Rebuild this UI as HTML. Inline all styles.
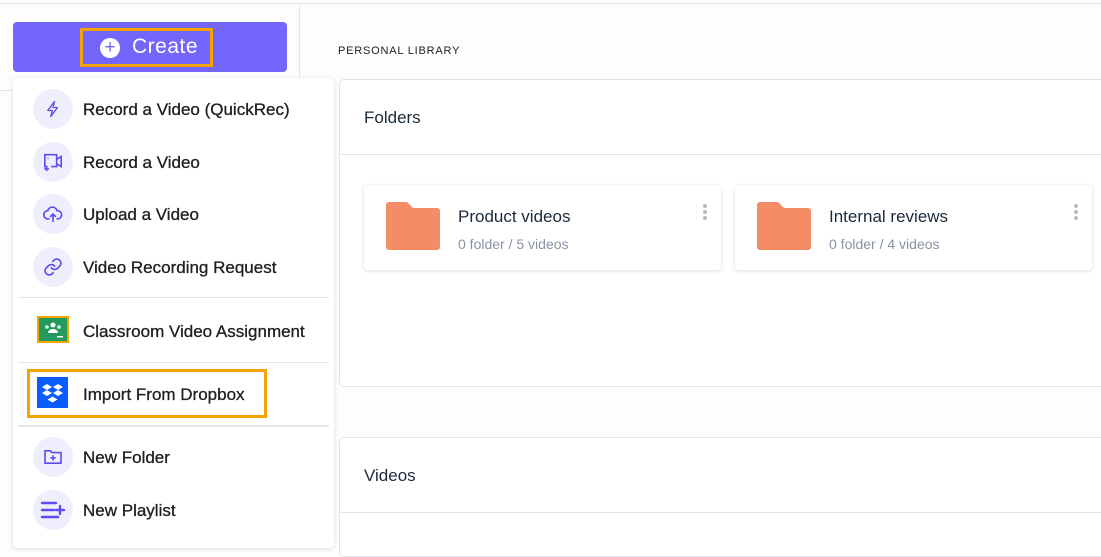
<!DOCTYPE html>
<html><head><style>
*{box-sizing:border-box;margin:0;padding:0}
body{width:1101px;height:537px;overflow:hidden;background:#fdfdfd;font-family:"Liberation Sans",sans-serif;position:relative;color:#222}
.topline{position:absolute;left:0;top:3px;width:1101px;height:1px;background:#e4e4ea}
.vline{position:absolute;left:299px;top:3px;width:1px;height:88px;background:#e4e4ea}
.hline{position:absolute;left:0;top:90px;width:14px;height:1px;background:#e4e4ea}
.create{position:absolute;left:13px;top:22px;width:274px;height:50px;background:#7566fb;border-radius:4px}
.cbox{position:absolute;left:80px;top:28px;width:133px;height:39px;border:3px solid #f5a300}
.cbox .plus{position:absolute;left:17px;top:7px;width:20px;height:20px;border-radius:50%;background:#fff;color:#7566fb;font-size:19px;line-height:19px;text-align:center}
.cbox span.t{position:absolute;left:49px;top:4px;color:#fff;font-size:21px;letter-spacing:.5px}
.lib{position:absolute;left:338px;top:45px;font-size:11px;letter-spacing:.8px;color:#222}
.menu{position:absolute;left:13px;top:78px;width:321px;height:470px;background:#fff;border-radius:5px;box-shadow:0 1px 6px rgba(0,0,0,.12)}
.item{position:absolute;left:20px;height:40px;width:300px}
.ic{position:absolute;left:0;top:0;width:40px;height:40px;border-radius:50%;background:#efeefd;display:flex;align-items:center;justify-content:center}
.item .l{position:absolute;left:50px;top:11px;font-size:17px;color:#1e1e1e;white-space:nowrap;-webkit-text-stroke:.3px #1e1e1e}
.sep{position:absolute;left:5px;width:311px;height:1px;background:#e6e6ea}
.panel{position:absolute;left:339px;width:770px;background:#fff;border:1px solid #e2e2ea;border-radius:5px}
.ph{font-size:17px;color:#1a2a3a;position:absolute;left:24px}
.card{position:absolute;top:185px;width:357px;height:85px;background:#fff;border-radius:4px;box-shadow:0 1px 4px rgba(0,0,0,.15)}
.card .fold{position:absolute;left:22px;top:17px}
.card .n{position:absolute;left:94px;top:22px;font-size:17px;color:#1a2a3a}
.card .s{position:absolute;left:94px;top:51px;font-size:14px;color:#8a93a3}
.card .d{position:absolute;right:14px;top:19px;width:4px}
.card .d i{display:block;width:4px;height:4px;border-radius:50%;background:#b5bac4;margin-bottom:2px}
</style></head><body>
<div class="topline"></div><div class="vline"></div><div class="hline"></div>
<div class="create"></div>
<div class="cbox"><div class="plus">+</div><span class="t">Create</span></div>
<div class="lib">PERSONAL LIBRARY</div>

<div class="panel" style="top:79px;height:308px">
<div class="ph" style="top:28px">Folders</div>
<div style="position:absolute;left:0;right:0;top:74px;height:1px;background:#e2e2ea"></div>
</div>
<div class="panel" style="top:437px;height:120px">
<div class="ph" style="top:28px">Videos</div>
<div style="position:absolute;left:0;right:0;top:74px;height:1px;background:#e2e2ea"></div>
</div>

<div class="card" style="left:364px">
<svg class="fold" width="54" height="48" viewBox="0 0 54 48"><path d="M3 0h18l6 6h24a3 3 0 0 1 3 3v36a3 3 0 0 1-3 3H3a3 3 0 0 1-3-3V3a3 3 0 0 1 3-3z" fill="#f48c66"/></svg>
<div class="n">Product videos</div><div class="s">0 folder / 5 videos</div>
<div class="d"><i></i><i></i><i></i></div></div>
<div class="card" style="left:735px">
<svg class="fold" width="54" height="48" viewBox="0 0 54 48"><path d="M3 0h18l6 6h24a3 3 0 0 1 3 3v36a3 3 0 0 1-3 3H3a3 3 0 0 1-3-3V3a3 3 0 0 1 3-3z" fill="#f48c66"/></svg>
<div class="n">Internal reviews</div><div class="s">0 folder / 4 videos</div>
<div class="d"><i></i><i></i><i></i></div></div>

<div class="menu">
<div class="item" style="top:11px"><div class="ic"><svg width="18" height="18" viewBox="0 0 24 24" fill="none" stroke="#5b4df0" stroke-width="1.8" stroke-linejoin="round"><path d="M14 2L5 14h6l-2 8 9-12h-6z"/></svg></div><div class="l">Record a Video (QuickRec)</div></div>
<div class="item" style="top:64px"><div class="ic"><svg width="22" height="20" viewBox="0 0 24 22" fill="none" stroke="#5b4df0" stroke-width="1.8"><path d="M6 16H3V3h13v13h-6M16 8l5-3v11l-5-3M5 16v5M2.5 18.5h5M6 7h1"/></svg></div><div class="l">Record a Video</div></div>
<div class="item" style="top:116px"><div class="ic"><svg width="20" height="18" viewBox="0 0 24 22" fill="none" stroke="#5b4df0" stroke-width="2" stroke-linecap="round"><path d="M7 17H6a5 5 0 0 1-.5-10A6 6 0 0 1 17 7a4.5 4.5 0 0 1 1 10h-1M12 20v-9M9 14l3-3 3 3"/></svg></div><div class="l">Upload a Video</div></div>
<div class="item" style="top:169px"><div class="ic"><svg width="20" height="20" viewBox="0 0 24 24" fill="none" stroke="#5b4df0" stroke-width="2" stroke-linecap="round"><path d="M10 13a5 5 0 0 0 7.5.5l3-3a5 5 0 0 0-7-7l-1.7 1.7M14 11a5 5 0 0 0-7.5-.5l-3 3a5 5 0 0 0 7 7l1.7-1.7"/></svg></div><div class="l">Video Recording Request</div></div>
<div class="sep" style="top:219px"></div>
<div class="item" style="top:233px"><div style="position:absolute;left:4px;top:5px;width:32px;height:27px;background:#f5a300;padding:2px"><div style="width:100%;height:100%;background:#239a5c;position:relative"><svg width="28" height="23" viewBox="0 0 28 23"><circle cx="14" cy="7" r="2.5" fill="#fff"/><circle cx="8" cy="9" r="1.8" fill="#cfe"/><circle cx="20" cy="9" r="1.8" fill="#cfe"/><path d="M9 15a5 4 0 0 1 10 0z" fill="#fff"/><rect x="18" y="18" width="6" height="1.5" fill="#fff"/></svg></div></div><div class="l">Classroom Video Assignment</div></div>
<div class="sep" style="top:284px"></div>
<div style="position:absolute;left:14px;top:291px;width:240px;height:49px;border:3px solid #f5a300"></div>
<div class="item" style="top:296px"><div style="position:absolute;left:4px;top:3px;width:31px;height:31px;background:#0a5cff"><svg width="31" height="31" viewBox="0 0 31 31" fill="#fff"><path d="M10 7l5 3-5 3-5-3zM21 7l5 3-5 3-5-3zM10 13l5 3-5 3-5-3zM21 13l5 3-5 3-5-3zM15.5 19.5l5 3-5 3-5-3z"/></svg></div><div class="l">Import From Dropbox</div></div>
<div class="sep" style="top:347px;height:2px"></div>
<div class="item" style="top:359px"><div class="ic"><svg width="18" height="16" viewBox="0 0 20 18" fill="none" stroke="#5b4df0" stroke-width="1.8"><path d="M1 2h6l2 2h10v12H1zM10 7v6M7 10h6"/></svg></div><div class="l">New Folder</div></div>
<div class="item" style="top:412px"><div class="ic"><svg width="26" height="20" viewBox="0 0 26 20" fill="none" stroke="#5b4df0" stroke-width="2.4" stroke-linecap="round"><path d="M2 3h14M2 10h12M2 17h16M20 6v8M16 10h8"/></svg></div><div class="l">New Playlist</div></div>
</div>
</body></html>
